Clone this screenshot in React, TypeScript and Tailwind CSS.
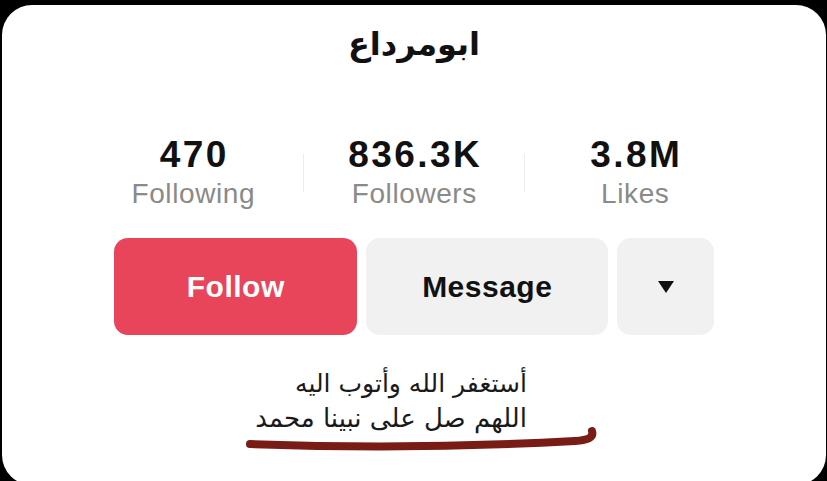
import React from "react";

const latin = { fontFamily: '"Liberation Sans", Arial, sans-serif' };
const arabic = { fontFamily: '"DejaVu Sans", "Noto Sans", sans-serif' };

function Stat({ value, label }: { value: string; label: string }) {
  return (
    <div className="flex w-[220px] flex-col items-center">
      <div className="pl-[2.4px] text-[37px] font-bold leading-[42px] tracking-[2.4px] text-[#111]">{value}</div>
      <div className="pl-[0.6px] text-[28px] leading-[35px] tracking-[0.6px] text-[#8a8a8a]">{label}</div>
    </div>
  );
}

export default function App() {
  return (
    <div className="h-[481px] w-[827px] overflow-hidden bg-black pl-[2px] pt-[5px]" style={latin}>
      <div className="relative flex h-[480px] w-[824px] flex-col items-center rounded-[30px] bg-white">
        <div dir="rtl" className="mt-[11px] text-[32px] font-bold leading-[56px] text-[#111]" style={arabic}>
          ابومرداع
        </div>
        <div className="mt-[62px] flex items-center">
          <Stat value="470" label="Following" />
          <div className="mt-[0px] h-[38px] w-px bg-[#ececec]" />
          <Stat value="836.3K" label="Followers" />
          <div className="mt-[0px] h-[38px] w-px bg-[#ececec]" />
          <Stat value="3.8M" label="Likes" />
        </div>
        <div className="mt-[27px] flex gap-[9px]">
          <div className="flex h-[97px] w-[243px] items-center justify-center rounded-[14px] bg-[#e8445a] pl-[0.5px] text-[30px] font-bold tracking-[0.5px] text-white">
            Follow
          </div>
          <div className="flex h-[97px] w-[242px] items-center justify-center rounded-[14px] bg-[#f1f1f1] pl-[0.5px] text-[30px] font-bold tracking-[0.5px] text-[#111]">
            Message
          </div>
          <div className="flex h-[97px] w-[97px] items-center justify-center rounded-[14px] bg-[#f1f1f1]">
            <svg width="18" height="14" viewBox="0 0 18 14">
              <path d="M1 1 H17 L9 13 Z" fill="#111" />
            </svg>
          </div>
        </div>
        <div dir="rtl" className="mt-[31px] w-full pr-[299px] text-[#1a1a1a]" style={arabic}>
          <div className="text-[25px] leading-[35px]">أستغفر الله وأتوب اليه</div>
          <div className="text-[26px] leading-[35px]">اللهم صل على نبينا محمد</div>
        </div>
        <svg
          className="pointer-events-none absolute left-0 top-0"
          width="824"
          height="476"
          viewBox="2 5 824 476"
        >
          <path
            d="M250 444 C 330 447, 450 448, 575 441 C 588 440, 594 438, 592 431"
            fill="none"
            stroke="#7a1c16"
            strokeWidth="8"
            strokeLinecap="round"
          />
        </svg>
      </div>
    </div>
  );
}
